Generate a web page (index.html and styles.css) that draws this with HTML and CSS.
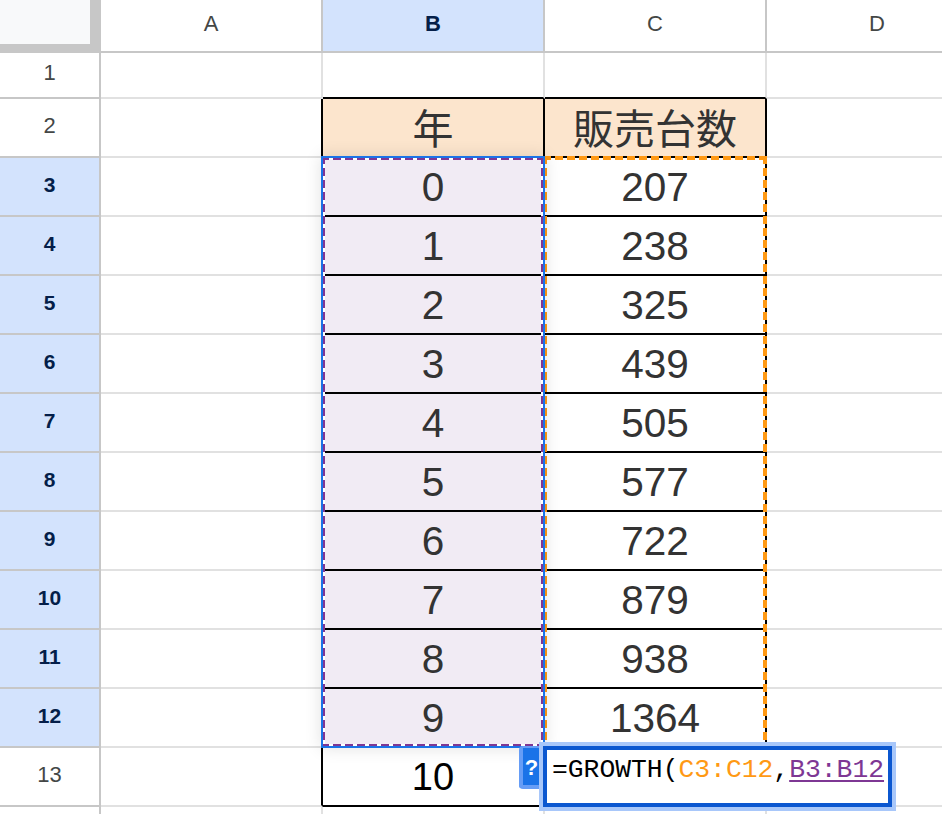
FILE: index.html
```html
<!DOCTYPE html>
<html lang="ja">
<head>
<meta charset="utf-8">
<title>GROWTH</title>
<link rel="stylesheet" href="styles.css">
</head>
<body>
<main class="sheet">
  <div class="grid">
    <div class="corner"><div class="corner-fill"></div></div>
    <div class="colhead">A</div><div class="colhead sel">B</div><div class="colhead">C</div><div class="colhead">D</div>

    <div class="rowhead">1</div><div class="cell"></div><div class="cell bb"></div><div class="cell bb"></div><div class="cell"></div>
    <div class="rowhead">2</div><div class="cell br"></div><div class="cell data head">年</div><div class="cell data head">販売台数</div><div class="cell"></div>
    <div class="rowhead sel">3</div><div class="cell br"></div><div class="cell data lilac">0</div><div class="cell data">207</div><div class="cell"></div>
    <div class="rowhead sel">4</div><div class="cell br"></div><div class="cell data lilac">1</div><div class="cell data">238</div><div class="cell"></div>
    <div class="rowhead sel">5</div><div class="cell br"></div><div class="cell data lilac">2</div><div class="cell data">325</div><div class="cell"></div>
    <div class="rowhead sel">6</div><div class="cell br"></div><div class="cell data lilac">3</div><div class="cell data">439</div><div class="cell"></div>
    <div class="rowhead sel">7</div><div class="cell br"></div><div class="cell data lilac">4</div><div class="cell data">505</div><div class="cell"></div>
    <div class="rowhead sel">8</div><div class="cell br"></div><div class="cell data lilac">5</div><div class="cell data">577</div><div class="cell"></div>
    <div class="rowhead sel">9</div><div class="cell br"></div><div class="cell data lilac">6</div><div class="cell data">722</div><div class="cell"></div>
    <div class="rowhead sel">10</div><div class="cell br"></div><div class="cell data lilac">7</div><div class="cell data">879</div><div class="cell"></div>
    <div class="rowhead sel">11</div><div class="cell br"></div><div class="cell data lilac">8</div><div class="cell data">938</div><div class="cell"></div>
    <div class="rowhead sel">12</div><div class="cell br"></div><div class="cell data lilac">9</div><div class="cell data">1364</div><div class="cell"></div>
    <div class="rowhead">13</div><div class="cell br"></div><div class="cell data result">10</div><div class="cell"></div><div class="cell"></div>
    <div class="rowhead last"></div><div class="cell"></div><div class="cell"></div><div class="cell"></div><div class="cell"></div>
  </div>

  <div class="range range-c"></div>
  <div class="range range-b"><div class="range-b-dash"></div></div>

  <div class="hint">?</div>
  <div class="editor"><div class="editor-inner">=GROWTH(<span class="ref-c">C3:C12</span>,<span class="ref-b">B3:B12</span></div></div>
</main>
</body>
</html>
```
FILE: styles.css
```css
* { box-sizing: border-box; }
html, body { margin: 0; padding: 0; background: #fff; }
body { overflow: hidden; }
.sheet {
  position: relative;
  width: 942px;
  height: 814px;
  overflow: hidden;
  font-family: "Liberation Sans", Arial, sans-serif;
}
.grid {
  display: grid;
  grid-template-columns: 101px 222px 222px 222px 222px;
  grid-template-rows: 53px 46px repeat(12, 59px) 20px;
}
.corner { background: #c7c7c7; }
.corner-fill { width: 90px; height: 44px; background: #f8f9fa; }
.colhead {
  display: flex;
  align-items: center;
  justify-content: center;
  border-right: 2px solid #c7c7c7;
  border-bottom: 2px solid #c7c7c7;
  font-size: 22px;
  color: #444746;
  padding-bottom: 3px;
}
.rowhead {
  display: flex;
  align-items: center;
  justify-content: center;
  border-right: 2px solid #c7c7c7;
  border-bottom: 2px solid #c7c7c7;
  font-size: 22px;
  color: #444746;
  padding-bottom: 4px;
}
.rowhead.last { border-bottom: 0; }
.sel { background: #d3e3fd; color: #041e49; font-weight: 700; }
.rowhead.sel { font-size: 21px; }
.cell {
  display: flex;
  align-items: center;
  justify-content: center;
  border-right: 2px solid #e1e1e1;
  border-bottom: 2px solid #e1e1e1;
}
.br { border-right-color: #000; }
.bb { border-bottom-color: #000; }
.data {
  border-right-color: #000;
  border-bottom-color: #000;
  font-size: 40.5px;
  color: #333;
  padding-top: 2px;
}
.data.head {
  background: #fce5cd;
  font-family: "Noto Sans CJK JP", "Liberation Sans", sans-serif;
  font-size: 41px;
  padding-top: 0;
  padding-bottom: 4px;
}
.lilac { background: #f1ebf4; }
.data.result { color: #000; font-size: 38px; }

.range { position: absolute; top: 156px; height: 592px; }
.range-b {
  left: 321px;
  width: 224px;
  border: 2px solid #1a73e8;
  box-shadow: 0 0 16px rgba(0, 0, 0, .12);
}
.range-b-dash {
  width: 100%;
  height: 100%;
  background:
    repeating-linear-gradient(90deg, #7e3794 0 6px, #fff 6px 10px, #7e3794 10px 12px) left top / 100% 2px no-repeat,
    repeating-linear-gradient(90deg, #7e3794 0 6px, #fff 6px 10px, #7e3794 10px 12px) left bottom / 100% 2px no-repeat,
    repeating-linear-gradient(180deg, #7e3794 0 6px, #fff 6px 10px, #7e3794 10px 12px) left top / 2px 100% no-repeat,
    repeating-linear-gradient(180deg, #7e3794 0 6px, #fff 6px 10px, #7e3794 10px 12px) right top / 2px 100% no-repeat;
}
.range-c {
  left: 543px;
  width: 224px;
  background:
    repeating-linear-gradient(90deg, #ff9914 0 8px, transparent 8px 12px) left top / 100% 4px no-repeat,
    repeating-linear-gradient(180deg, #ff9914 0 8px, transparent 8px 12px) left top / 4px 100% no-repeat,
    repeating-linear-gradient(180deg, #ff9914 0 8px, transparent 8px 12px) right top / 4px 100% no-repeat;
}

.hint {
  position: absolute;
  left: 519px;
  top: 746px;
  width: 24px;
  height: 43px;
  padding: 3px 3px 0 0;
  display: flex;
  align-items: center;
  justify-content: center;
  background: #1a73e8;
  border: solid #669df6;
  border-width: 2px 0 4px 4px;
  border-radius: 4px 0 0 4px;
  color: #fff;
  font-size: 22px;
  font-weight: 700;
}
.editor {
  position: absolute;
  left: 539px;
  top: 742px;
  width: 357px;
  height: 69px;
  border: 4px solid #a8c7fa;
}
.editor-inner {
  height: 100%;
  border: 4px solid #0b57d0;
  background: #fff;
  padding: 4px 0 0 5px;
  font-family: "Liberation Mono", monospace;
  font-size: 26.35px;
  line-height: 32px;
  color: #000;
  white-space: nowrap;
}
.ref-c { color: #ff9914; }
.ref-b {
  color: #7e3794;
  text-decoration: underline;
  text-decoration-thickness: 2px;
  text-underline-offset: 3px;
}
```
